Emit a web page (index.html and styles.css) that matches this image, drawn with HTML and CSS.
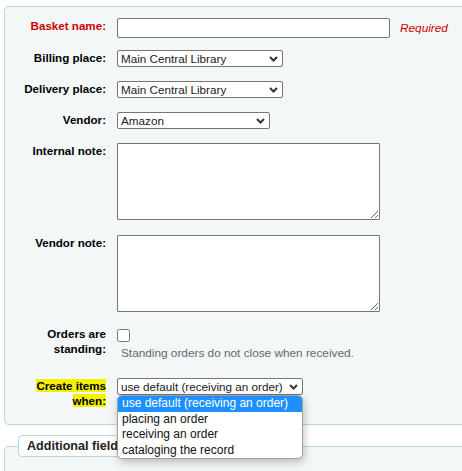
FILE: index.html
```html
<!DOCTYPE html>
<html>
<head>
<meta charset="utf-8">
<link rel="stylesheet" href="styles.css">
</head>
<body>
<fieldset class="rows">
  <div class="row">
    <label class="lbl required-lbl">Basket name:</label>
    <div class="field field-inline">
      <input type="text" class="text-input">
      <span class="required">Required</span>
    </div>
  </div>
  <div class="row r2">
    <label class="lbl">Billing place:</label>
    <div class="field">
      <span class="selwrap">
        <select class="sel sel-lib"><option>Main Central Library</option></select>
        <svg class="chev" width="9" height="6" viewBox="0 0 9 6"><polyline points="1,1 4.5,4.5 8,1" fill="none" stroke="#333" stroke-width="2"/></svg>
      </span>
    </div>
  </div>
  <div class="row">
    <label class="lbl">Delivery place:</label>
    <div class="field">
      <span class="selwrap">
        <select class="sel sel-lib"><option>Main Central Library</option></select>
        <svg class="chev" width="9" height="6" viewBox="0 0 9 6"><polyline points="1,1 4.5,4.5 8,1" fill="none" stroke="#333" stroke-width="2"/></svg>
      </span>
    </div>
  </div>
  <div class="row">
    <label class="lbl">Vendor:</label>
    <div class="field">
      <span class="selwrap">
        <select class="sel sel-vendor"><option>Amazon</option></select>
        <svg class="chev" width="9" height="6" viewBox="0 0 9 6"><polyline points="1,1 4.5,4.5 8,1" fill="none" stroke="#333" stroke-width="2"/></svg>
      </span>
    </div>
  </div>
  <div class="row">
    <label class="lbl">Internal note:</label>
    <div class="field"><textarea class="note"></textarea></div>
  </div>
  <div class="row r6">
    <label class="lbl">Vendor note:</label>
    <div class="field"><textarea class="note"></textarea></div>
  </div>
  <div class="row">
    <label class="lbl">Orders are standing:</label>
    <div class="field">
      <input type="checkbox" class="check">
      <div class="hint">Standing orders do not close when received.</div>
    </div>
  </div>
  <div class="row r8">
    <label class="lbl"><span class="hl">Create items when:</span></label>
    <div class="field">
      <span class="selwrap">
        <select class="sel sel-create"><option>use default (receiving an order)</option></select>
        <svg class="chev" width="9" height="6" viewBox="0 0 9 6"><polyline points="1,1 4.5,4.5 8,1" fill="none" stroke="#333" stroke-width="2"/></svg>
        <div class="popup">
          <div class="opt active">use default (receiving an order)</div>
          <div class="opt">placing an order</div>
          <div class="opt">receiving an order</div>
          <div class="opt">cataloging the record</div>
        </div>
      </span>
    </div>
  </div>
</fieldset>
<fieldset class="rows2">
  <legend class="legend">Additional fields</legend>
</fieldset>
</body>
</html>
```
FILE: styles.css
```css
html, body {
  margin: 0;
  padding: 0;
  overflow: hidden;
  background: #ffffff;
  font-family: "Liberation Sans", Arial, sans-serif;
  font-size: 12px;
  color: #000;
}

.rows {
  margin: 6px 0 0 4px;
  width: 520px;
  min-width: 0;
  padding: 11px 0 16px 0;
  border: 1px solid #b9d8d9;
  border-radius: 5px;
  background: #f3f7f8;
  display: flex;
  flex-direction: column;
  box-sizing: border-box;
}

.row {
  display: grid;
  grid-template-columns: 101px auto;
  column-gap: 11px;
  align-items: start;
}

.row + .row { margin-top: 14px; }
.row.r2 { margin-top: 12px; }
.row.r6 { margin-top: 15px; }
.row.r8 { margin-top: 18px; }

.lbl {
  text-align: right;
  font-weight: bold;
  line-height: 15px;
  font-size: 11.6px;
}

.required-lbl { color: #cc0000; }

.hl { background: #f5f000; }

.field { display: flex; flex-direction: column; align-items: flex-start; }
.field-inline { flex-direction: row; align-items: center; }

.text-input {
  box-sizing: border-box;
  width: 273px;
  height: 20px;
  margin: 0;
  border: 1px solid #767676;
  border-radius: 2px;
  background: #fff;
  padding: 0 4px;
  font: 12px "Liberation Sans", Arial, sans-serif;
}

.required {
  margin-left: 10px;
  color: #cc0000;
  font-style: italic;
  font-size: 11.8px;
}

.selwrap {
  position: relative;
  display: inline-block;
  height: 17px;
}

.sel {
  -webkit-appearance: none;
  appearance: none;
  box-sizing: border-box;
  height: 17px;
  margin: 0;
  border: 1px solid #767676;
  border-radius: 2px;
  background: #fff;
  padding: 0 0 0 3px;
  font: 11.7px "Liberation Sans", Arial, sans-serif;
  line-height: 15px;
  color: #222;
  display: block;
}

.sel-lib { width: 166px; }
.sel-vendor { width: 153px; }
.sel-create { width: 186px; }

.chev {
  position: absolute;
  right: 5px;
  top: 6px;
  pointer-events: none;
}

.note {
  box-sizing: border-box;
  width: 263px;
  height: 77px;
  margin: 0;
  border: 1px solid #767676;
  border-radius: 1px;
  background: #fff;
  display: block;
}

.check {
  margin: 3px 0 0 0;
  width: 13px;
  height: 13px;
}

.hint {
  margin-top: 4px;
  padding-left: 4px;
  line-height: 14px;
  color: #666;
  font-size: 11.8px;
}

.popup {
  position: absolute;
  top: 17px;
  left: 0;
  width: 186px;
  box-sizing: border-box;
  background: #fff;
  border: 1px solid #a0a0a0;
  border-radius: 5px;
  padding-bottom: 0;
  box-shadow: 1px 3px 8px rgba(0, 0, 0, 0.25);
  overflow: hidden;
  z-index: 10;
}

.opt {
  height: 15.5px;
  line-height: 15.5px;
  padding-left: 4px;
  color: #111;
  white-space: nowrap;
  font-size: 12px;
}

.opt.active {
  background: #1e8fff;
  color: #fff;
}

.rows2 {
  margin: 10px 0 0 4px;
  width: 520px;
  min-width: 0;
  padding: 0 0 40px 13px;
  border: 1px solid #b9d8d9;
  border-radius: 5px;
  background: #f3f7f8;
  box-sizing: border-box;
}

.legend {
  padding: 0 7px 0 8px;
  margin: 0;
  border: 1px solid #b9d8d9;
  border-radius: 4px;
  background: #fff;
  font-weight: bold;
  font-size: 12.6px;
  line-height: 20px;
  color: #222;
}
```
